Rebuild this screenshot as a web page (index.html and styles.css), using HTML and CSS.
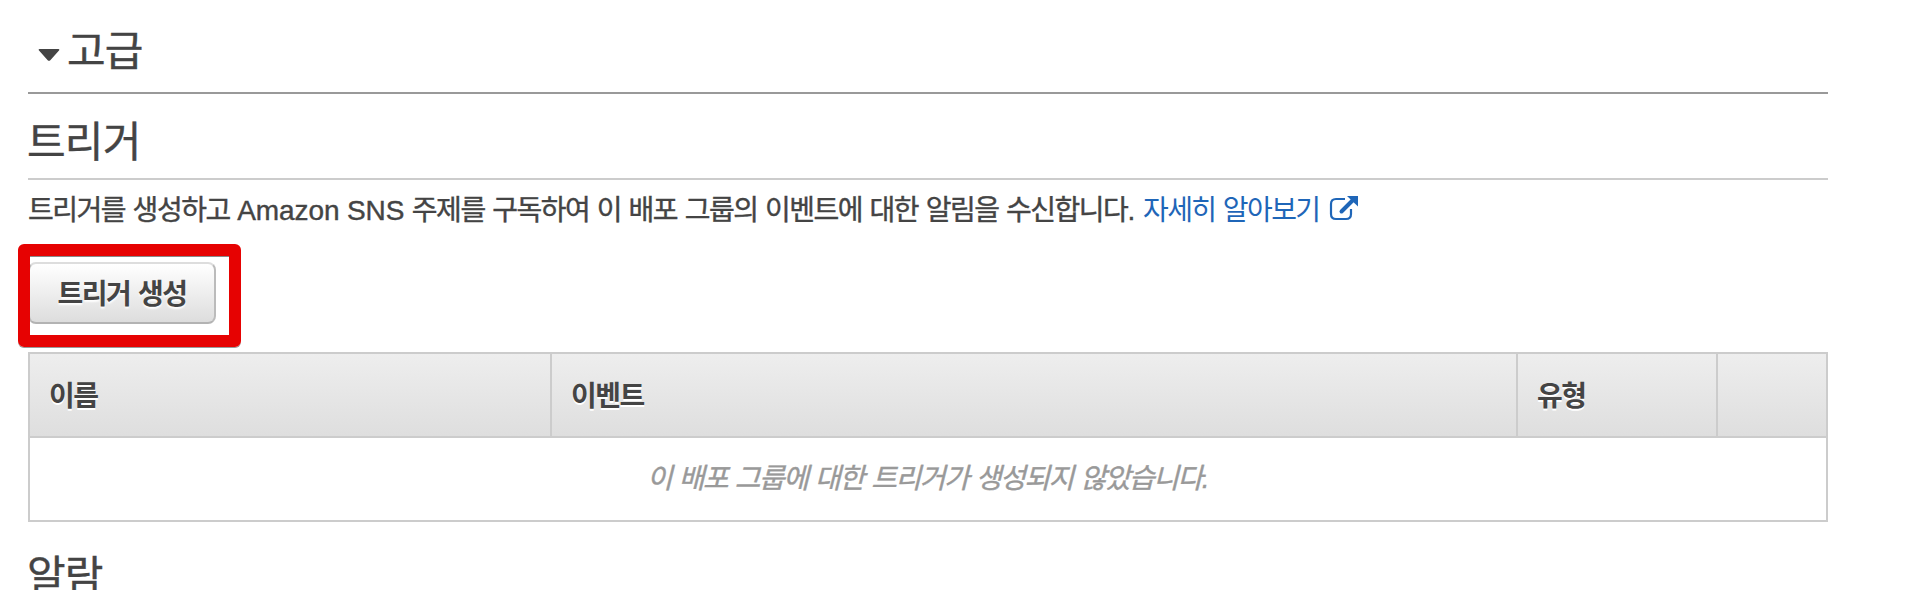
FILE: index.html
```html
<!DOCTYPE html>
<html lang="ko">
<head>
<meta charset="utf-8">
<title>고급</title>
<link rel="stylesheet" href="styles.css">
</head>
<body>
<main class="panel">
  <h2 class="section-toggle">
    <svg class="caret" width="22" height="14" viewBox="0 0 22 14"><path d="M1.5 1h19c.9 0 1.100.8.5 1.400L12.300 12.200c-.8.8-1.800.8-2.600 0L1 2.400C.4 1.800.6 1 1.500 1z"/></svg>
    <span>고급</span>
  </h2>
  <h2 class="subheading">트리거</h2>
  <p class="description"><span class="sentence">트리거를 생성하고 <span class="latin">Amazon SNS</span> 주제를 구독하여 이 배포 그룹의 이벤트에 대한 알림을 수신합니다.</span><a class="link">자세히 알아보기</a><svg class="external" width="30" height="28" viewBox="0 0 30 28"><path class="frame" d="M16 4H7Q2 4 2 9V19Q2 24 7 24H17Q22 24 22 19V14"/><path class="shaft" d="M12.500 16.500L24 5"/><path class="head" d="M18 1H29V11.500z"/></svg></p>
  <div class="actions">
    <button class="button">트리거 생성</button>
    <div class="highlight"></div>
  </div>
  <table class="triggers">
    <colgroup><col class="c-name"><col class="c-event"><col class="c-type"><col></colgroup>
    <thead><tr><th>이름</th><th>이벤트</th><th>유형</th><th></th></tr></thead>
    <tbody><tr><td colspan="4">이 배포 그룹에 대한 트리거가 생성되지 않았습니다.</td></tr></tbody>
  </table>
  <h2 class="alarm">알람</h2>
</main>
</body>
</html>
```
FILE: styles.css
```css
* { box-sizing: border-box; }
html { overflow: hidden; }
body {
  margin: 0;
  height: 590px;
  overflow: hidden;
  background: #fff;
  color: #444;
  font: 28px/34px "Liberation Sans", "Noto Sans CJK KR", sans-serif;
  letter-spacing: -1.48px;
  word-spacing: 1.2px;
}
.panel { width: 1800px; margin-left: 28px; }
h2 { margin: 0; font-size: 42px; font-weight: 400; letter-spacing: -0.8px; line-height: 50px; -webkit-text-stroke: 0.4px; }
.section-toggle {
  display: flex;
  align-items: center;
  height: 94px;
  padding: 8px 0 0 10px;
  border-bottom: 2px solid #999;
}
.section-toggle span { margin-left: 7px; padding-top: 4px; }
.caret { margin-top: 10px; fill: #444; }
.subheading { height: 86px; padding-top: 24px; border-bottom: 2px solid #ccc; text-indent: -1px; }
.description { display: flex; align-items: center; height: 64px; margin: 0; padding-bottom: 2px; white-space: nowrap; }
.latin { letter-spacing: -0.1px; word-spacing: 0; }
.sentence { width: 1115px; text-indent: 0; -webkit-text-stroke: 0.4px; }
.link { width: 186px; color: #1f66b8; letter-spacing: -1.6px; }
.external { margin-top: -4px; }
.external path { fill: none; stroke: #1f66b8; }
.external .frame { stroke-width: 2.200; }
.external .shaft { stroke-width: 4; stroke-linecap: round; }
.external .head { fill: #1f66b8; stroke: none; }
.actions { position: relative; height: 108px; padding-top: 18px; }
.button {
  display: block;
  width: 188px;
  height: 62px;
  padding: 3px 0 0;
  border: 2px solid;
  border-color: #ddd #bbb #b3b3b3 #bbb;
  border-radius: 8px;
  background: linear-gradient(#fff, #ddd);
  color: #444;
  font: bold 28px/55px "Liberation Sans", "Noto Sans CJK KR", sans-serif;
  letter-spacing: inherit;
  word-spacing: inherit;
  text-shadow: 0 2px 2px #fff;
}
.highlight {
  position: absolute;
  left: -10px;
  top: 0;
  width: 223px;
  height: 103px;
  border: 12px solid #e60202;
  border-radius: 6px;
  box-shadow: 0 1px 0 #999, inset 0 1px 0 #888;
}
.triggers { width: 1800px; height: 170px; table-layout: fixed; border-collapse: collapse; border: 2px solid #ccc; }
.c-name { width: 522px; }
.c-event { width: 966px; }
.c-type { width: 200px; }
th { height: 84px; padding: 3px 20px 0 19px; border: 2px solid #ccc; text-align: left; text-shadow: 0 2px 0 #fff; }
thead tr { background: linear-gradient(#eee, #dedede); }
td { height: 84px; padding: 0 1px 1px 0; text-align: center; color: #999; font-style: italic; -webkit-text-stroke: 0.4px; }
.alarm { padding-top: 30px; text-indent: -1px; }
```
